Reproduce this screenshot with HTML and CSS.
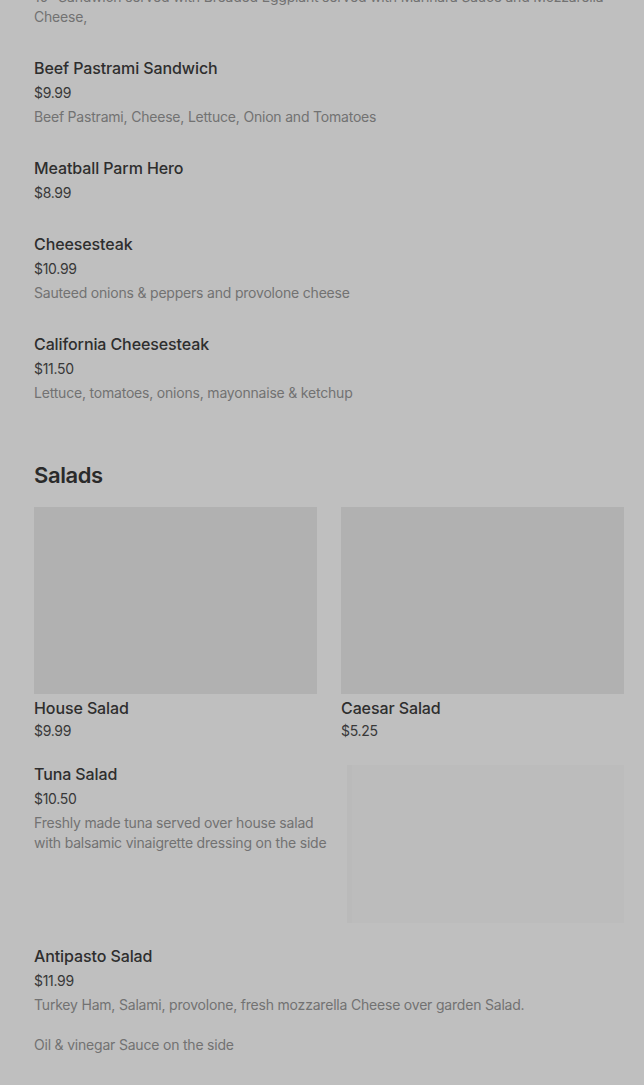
FILE: index.html
```html
<!DOCTYPE html>
<html>
<head>
<meta charset="utf-8">
<link rel="stylesheet" href="styles.css">
</head>
<body>
<main class="menu">
  <section class="list">
    <div class="item item-cut">
      <p class="desc">10" Sandwich served with Breaded Eggplant served with Marinara Sauce and Mozzarella Cheese,</p>
    </div>
    <div class="item">
      <h3 class="title">Beef Pastrami Sandwich</h3>
      <p class="price">$9.99</p>
      <p class="desc">Beef Pastrami, Cheese, Lettuce, Onion and Tomatoes</p>
    </div>
    <div class="item">
      <h3 class="title">Meatball Parm Hero</h3>
      <p class="price">$8.99</p>
    </div>
    <div class="item">
      <h3 class="title">Cheesesteak</h3>
      <p class="price">$10.99</p>
      <p class="desc">Sauteed onions &amp; peppers and provolone cheese</p>
    </div>
    <div class="item">
      <h3 class="title">California Cheesesteak</h3>
      <p class="price">$11.50</p>
      <p class="desc">Lettuce, tomatoes, onions, mayonnaise &amp; ketchup</p>
    </div>
  </section>

  <section class="section">
    <h2 class="section-title">Salads</h2>
    <div class="cards">
      <div class="card">
        <div class="card-img"></div>
        <h3 class="title card-title">House Salad</h3>
        <p class="price card-price">$9.99</p>
      </div>
      <div class="card">
        <div class="card-img"></div>
        <h3 class="title card-title">Caesar Salad</h3>
        <p class="price card-price">$5.25</p>
      </div>
    </div>
    <div class="row">
      <div class="row-text">
        <h3 class="title">Tuna Salad</h3>
        <p class="price">$10.50</p>
        <p class="desc">Freshly made tuna served over house salad with balsamic vinaigrette dressing on the side</p>
      </div>
      <div class="row-img"></div>
    </div>
    <div class="item item-last">
      <h3 class="title">Antipasto Salad</h3>
      <p class="price">$11.99</p>
      <p class="desc desc-pre">Turkey Ham, Salami, provolone, fresh mozzarella Cheese over garden Salad.

Oil &amp; vinegar Sauce on the side</p>
    </div>
  </section>
</main>
</body>
</html>
```
FILE: styles.css
```css
* { box-sizing: border-box; }
html, body {
  margin: 0;
  padding: 0;
  background: #bfbfbf;
  height: 100%;
  overflow: hidden;
}
body {
  font-family: Inter, "Noto Sans", "Liberation Sans", sans-serif;
  color: #2e2e2e;
}
.menu {
  padding: 0 20px 0 34px;
  margin-top: -13px;
}
.list {
  display: flex;
  flex-direction: column;
  gap: 29px;
}
.item {
  display: flex;
  flex-direction: column;
}
.title {
  margin: 0;
  font-size: 16px;
  line-height: 24px;
  font-weight: 500;
  color: #2e2e2e;
  letter-spacing: -0.1px;
}
.price {
  margin: 3px 0 0;
  font-size: 14px;
  line-height: 20px;
  color: #383838;
  letter-spacing: -0.3px;
}
.desc {
  margin: 4px 0 0;
  font-size: 14px;
  line-height: 20px;
  color: #727272;
  letter-spacing: -0.2px;
}
.item-cut .desc { margin: 0; }
.desc-pre { white-space: pre-line; }

.section {
  margin-top: 56px;
}
.section-title {
  margin: 0;
  font-size: 22px;
  line-height: 32px;
  font-weight: 600;
  color: #2a2a2a;
  letter-spacing: -0.4px;
}
.cards {
  margin-top: 16px;
  display: grid;
  grid-template-columns: 1fr 1fr;
  gap: 24px;
}
.card { display: flex; flex-direction: column; }
.card-img {
  height: 187px;
  background: #b1b1b1;
}
.card-title { margin-top: 2px; }
.card-price { margin-top: 1px; }

.row {
  margin-top: 21px;
  display: flex;
  gap: 16px;
  align-items: flex-start;
}
.row-text {
  flex: 1;
  display: flex;
  flex-direction: column;
}
.row-img {
  width: 277px;
  height: 158px;
  margin-top: 3px;
  background: #bcbcbc;
  box-shadow: inset 5px 0 0 #bababa;
}
.item-last { margin-top: 21px; }
```
